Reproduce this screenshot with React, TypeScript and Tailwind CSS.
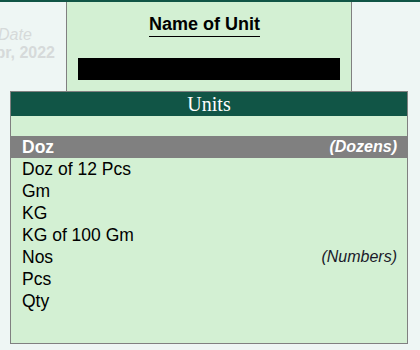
import React from 'react';

const units: { name: string; note?: string }[] = [
  { name: 'Doz', note: '(Dozens)' },
  { name: 'Doz of 12 Pcs' },
  { name: 'Gm' },
  { name: 'KG' },
  { name: 'KG of 100 Gm' },
  { name: 'Nos', note: '(Numbers)' },
  { name: 'Pcs' },
  { name: 'Qty' },
];

const App: React.FC = () => {
  const selected = 0;
  return (
    <div
      className="relative w-[420px] h-[350px] overflow-hidden bg-[#eef6f4]"
      style={{ fontFamily: '"Liberation Sans", Arial, sans-serif' }}
    >
      <div className="h-[2px] bg-[#115546]" />

      <div className="flex h-[89px]">
        {/* left column, date clipped by the panel edge */}
        <div className="w-[66px] overflow-hidden pt-[24px] text-[#d6dada] text-[16px] leading-[18px]">
          <div className="italic whitespace-nowrap -ml-[2px]">Date</div>
          <div className="flex justify-end w-[55px] font-bold whitespace-nowrap">
            <span>1-Apr, 2022</span>
          </div>
        </div>

        {/* center panel */}
        <div className="w-[286px] border-x border-[#808080] bg-[#d3f0d3] flex flex-col items-center">
          <div className="mt-[12px] mr-[9px] text-[18px] leading-[21px] font-bold text-black border-b border-black pb-[1px]">
            Name of Unit
          </div>
          <div className="mt-[21px] w-[262px] h-[22px] bg-black" />
        </div>

        <div className="flex-1" />
      </div>

      {/* dropdown list overlay */}
      <div className="absolute left-[10px] top-[91px] w-[398px] h-[253px] border border-[#808080] bg-[#d3f0d3]">
        <div
          className="h-[24px] bg-[#115546] text-white text-center text-[20px] leading-[24px]"
          style={{ fontFamily: '"Liberation Serif", "Times New Roman", serif' }}
        >
          Units
        </div>
        <div className="h-[20px]" />
        <div className="flex flex-col">
          {units.map((u, i) => (
            <div
              key={u.name}
              className={`flex items-center justify-between h-[22px] pl-[11px] pr-[10px] text-[17.5px] ${
                i === selected ? 'bg-[#808080] text-white font-bold' : 'text-black'
              }`}
            >
              <span>{u.name}</span>
              {u.note && (
                <span className={`italic text-[16px] ${i === selected ? 'font-bold' : 'text-[#1a1a2a]'}`}>
                  {u.note}
                </span>
              )}
            </div>
          ))}
        </div>
      </div>
    </div>
  );
};

export default App;
